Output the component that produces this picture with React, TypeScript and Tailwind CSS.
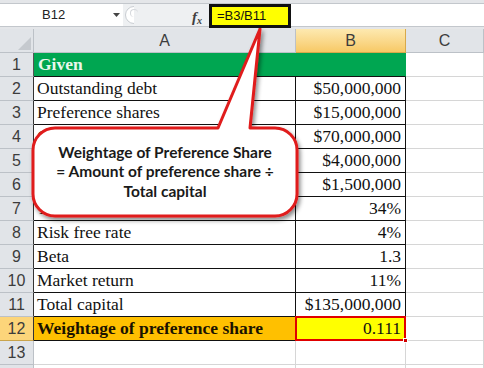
import React from "react";

type Row = { n: number; a: string; b: string };

const rows: Row[] = [
  { n: 2, a: "Outstanding debt", b: "$50,000,000" },
  { n: 3, a: "Preference shares", b: "$15,000,000" },
  { n: 4, a: "Common stock", b: "$70,000,000" },
  { n: 5, a: "Interest expense", b: "$4,000,000" },
  { n: 6, a: "Preference dividend", b: "$1,500,000" },
  { n: 7, a: "Tax rate", b: "34%" },
  { n: 8, a: "Risk free rate", b: "4%" },
  { n: 9, a: "Beta", b: "1.3" },
  { n: 10, a: "Market return", b: "11%" },
  { n: 11, a: "Total capital", b: "$135,000,000" },
];

const hdr =
  "flex items-center justify-center bg-[#e1e4e8] border-r border-b border-[#bcc1c7] text-[16px] text-[#3c3c3c] font-['Liberation_Sans',Arial,sans-serif]";
const cellC = "border-r border-b border-[#d6d6d6] bg-white";

export default function App() {
  return (
    <div className="relative w-[484px] h-[368px] overflow-hidden bg-white">
      {/* top strip */}
      <div className="h-[4px] bg-[#e4e6e9] border-b border-[#c3c7cc]" />
      {/* formula bar */}
      <div className="h-[22px] flex items-start font-['Liberation_Sans',Arial,sans-serif]">
        <div className="w-[123px] h-[22px] bg-white flex items-center relative">
          <span className="pl-[42px] text-[13px] text-[#222]">B12</span>
          <svg className="absolute left-[113px] top-[9px]" width="7" height="4" viewBox="0 0 7 4">
            <path d="M0 0 L7 0 L3.5 4 Z" fill="#444" />
          </svg>
        </div>
        <div className="w-[86px] h-[22px] bg-[#eef0f2] flex items-center relative">
          <div className="absolute left-[2px] top-[2px] w-[18px] h-[18px] rounded-full border border-[#c9cdd2] bg-white" />
          <div className="absolute left-[11px] top-[2px] w-[10px] h-[18px] bg-[#eef0f2]" />
          <div className="absolute left-[7px] top-[5px] w-[8px] h-[8px] rounded-full border-t border-l border-[#d5d8dc]" />
          <span className="absolute left-[69px] top-[2px] text-[15px] italic font-bold text-[#404040] font-['Liberation_Serif',serif]">
            f<span className="text-[10px] align-[-2px]">x</span>
          </span>
        </div>
        <div className="relative z-10 w-[82px] h-[24px] bg-[#ffff00] border-[3px] border-[#111] flex items-center">
          <span className="pl-[5px] text-[13px] text-[#111]">=B3/B11</span>
        </div>
        <div className="flex-1 h-[22px] bg-white" />
      </div>
      <div className="h-[3px] bg-[#e4e6e9] border-t border-[#c3c7cc]" />

      {/* grid */}
      <div className="grid grid-cols-[34px_262px_110px_78px] auto-rows-[24px]">
        {/* header row */}
        <div className="relative bg-[#e1e4e8] border-r border-b border-[#bcc1c7]">
          <svg className="absolute right-[2px] bottom-[2px]" width="13" height="13" viewBox="0 0 13 13">
            <path d="M13 0 L13 13 L0 13 Z" fill="#c5c9ce" />
          </svg>
        </div>
        <div className={hdr}>A</div>
        <div className="flex items-center justify-center bg-gradient-to-b from-[#fde9b0] to-[#f7c965] border-r border-b border-[#d8a94a] text-[16px] text-[#3c3c3c] font-['Liberation_Sans',Arial,sans-serif]">
          B
        </div>
        <div className={hdr}>C</div>

        {/* row 1 */}
        <div className={hdr + " border-r-[#555]"}>1</div>
        <div className="col-span-2 flex items-center bg-[#00a651] border-r border-b border-r-[#00a651] border-b-[#111] pl-[4px] text-[17.5px] font-bold text-[#eaf7ec] font-['Liberation_Serif',serif]">
          Given
        </div>
        <div className={cellC} />

        {rows.map((r) => (
          <React.Fragment key={r.n}>
            <div className={hdr + " border-r-[#333]"}>{r.n}</div>
            <div className="flex items-center bg-white border-r border-b border-[#111] pl-[3px] text-[17.5px] text-[#111] font-['Liberation_Serif',serif] whitespace-nowrap overflow-hidden">
              {r.a}
            </div>
            <div className="flex items-center justify-end bg-white border-r border-b border-[#111] pr-[4px] text-[17.5px] text-[#111] font-['Liberation_Serif',serif] whitespace-nowrap">
              {r.b}
            </div>
            <div className={cellC} />
          </React.Fragment>
        ))}

        {/* row 12 */}
        <div className="flex items-center justify-center bg-[#fcd57a] border-r border-b border-[#c9a44c] border-r-[#333] text-[16px] text-[#3c3c3c] font-['Liberation_Sans',Arial,sans-serif]">
          12
        </div>
        <div className="flex items-center bg-[#ffc000] border-r border-b border-[#111] pl-[3px] text-[17.5px] font-bold text-[#1a1200] font-['Liberation_Serif',serif] whitespace-nowrap">
          Weightage of preference share
        </div>
        <div className="relative flex items-center justify-end bg-[#ffff00] border-[2px] border-[#e00000] ml-[-1px] mt-[-1px] pr-[3px] text-[17.5px] text-[#111] font-['Liberation_Serif',serif]">
          0.111
          <div className="absolute right-[-4px] bottom-[-4px] w-[5px] h-[5px] bg-[#d00000] border border-white" />
        </div>
        <div className={cellC} />

        {/* row 13 */}
        <div className={hdr}>13</div>
        <div className={cellC} />
        <div className={cellC} />
        <div className={cellC} />

        {/* row 14 */}
        <div className={hdr} />
        <div className={cellC} />
        <div className={cellC} />
        <div className={cellC} />
      </div>

      {/* callout overlay */}
      <svg className="absolute left-0 top-0 pointer-events-none" width="484" height="368" viewBox="0 0 484 368">
        <defs>
          <filter id="sh" x="-10%" y="-10%" width="130%" height="140%">
            <feDropShadow dx="2" dy="3" stdDeviation="2" floodColor="#000" floodOpacity="0.45" />
          </filter>
        </defs>
        <path
          d="M55 128 L218 128 L260 29 L250 128 L275 128 A22 22 0 0 1 297 150 L297 194 A22 22 0 0 1 275 216 L55 216 A22 22 0 0 1 33 194 L33 150 A22 22 0 0 1 55 128 Z"
          fill="#ffffff"
          stroke="#e01b1b"
          strokeWidth="3"
          strokeLinejoin="round"
          filter="url(#sh)"
        />
      </svg>
      <div className="absolute left-[33px] top-[128px] w-[264px] h-[88px] flex flex-col items-center justify-center text-center font-['Lato',sans-serif] font-bold text-[15.5px] leading-[19.5px] text-[#1a1a1a]">
        <div>Weightage of Preference Share</div>
        <div>= Amount of preference share ÷</div>
        <div>Total capital</div>
      </div>
    </div>
  );
}
